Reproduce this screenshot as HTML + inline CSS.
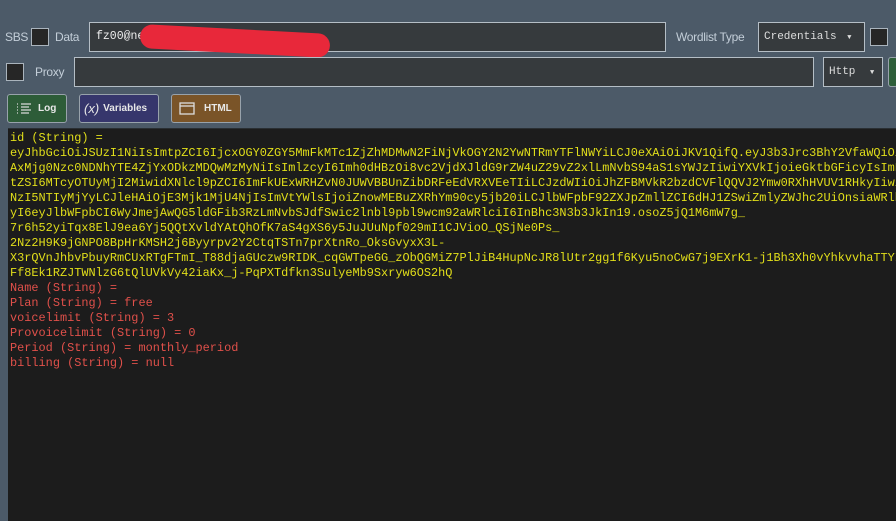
<!DOCTYPE html>
<html><head><meta charset="utf-8"><style>
*{box-sizing:border-box;margin:0;padding:0}
html,body{background:#4c5a68}
body{width:896px;height:521px;position:relative;overflow:hidden;font-family:"Liberation Sans",sans-serif;color:#c9d3dc}
.abs{position:absolute;white-space:nowrap}
.lbl{font-size:12px;color:#c3ced8;letter-spacing:-0.3px}
.cb{background:#262626;border:1px solid #aab4bd}
.inp{background:#363a3d;border:1px solid #b5bec6}
.btn{position:absolute;top:94px;height:29px;border:1px solid #98a2ab;border-radius:3px;font-size:10px;font-weight:bold;color:#e8e8e8;display:flex;align-items:center;white-space:nowrap}
#out{position:absolute;left:8px;top:128px;width:888px;height:393px;background:#1c1c1c;border-top:1px solid #2a2f33;font-family:"Liberation Mono",monospace;font-size:11.9px;line-height:15px;padding:2px 0 0 2px;white-space:pre;color:#e2df1a}
.r{color:#e0504a}
</style></head><body>
<div class="abs lbl" style="left:5px;top:30px">SBS</div>
<div class="abs cb" style="left:31px;top:28px;width:18px;height:18px"></div>
<div class="abs lbl" style="left:55px;top:30px">Data</div>
<div class="abs inp" style="left:89px;top:22px;width:577px;height:30px;font-family:'Liberation Mono',monospace;font-size:11.5px;color:#eee;padding:7px 6px">fz00@ne</div>
<div class="abs" style="left:140px;top:29px;width:190px;height:24px;background:#e8283a;border-radius:12px;transform:rotate(3deg)"></div>
<div class="abs lbl" style="left:676px;top:30px">Wordlist Type</div>
<div class="abs inp" style="left:758px;top:22px;width:107px;height:30px;font-family:'Liberation Mono',monospace;font-size:11px;color:#ddd;padding:8px 5px">Credentials <span style="font-size:7px;margin-left:4px">▼</span></div>
<div class="abs cb" style="left:870px;top:28px;width:18px;height:18px"></div>
<div class="abs cb" style="left:6px;top:63px;width:18px;height:18px"></div>
<div class="abs lbl" style="left:35px;top:65px">Proxy</div>
<div class="abs inp" style="left:74px;top:57px;width:740px;height:30px"></div>
<div class="abs inp" style="left:823px;top:57px;width:60px;height:30px;font-family:'Liberation Mono',monospace;font-size:11px;color:#ddd;padding:8px 5px">Http <span style="font-size:7px;margin-left:8px">▼</span></div>
<div class="abs" style="left:888px;top:57px;width:10px;height:30px;background:#2e5e3a;border:1px solid #98a2ab;border-radius:3px"></div>
<div class="btn" style="left:7px;width:60px;background:#2d5c38;padding-left:8px"><svg width="16" height="14" viewBox="0 0 16 14" stroke="#d8d8d8" stroke-width="1.2"><path d="M1 2h1M5 2h10M1 5h1M5 5h8M1 8h1M5 8h10M1 11h1M5 11h8"/></svg><span style="margin-left:6px">Log</span></div>
<div class="btn" style="left:79px;width:80px;background:#36366c;padding-left:4px"><span style="font-style:italic;font-weight:normal;font-size:13px">(x)</span><span style="margin-left:4px">Variables</span></div>
<div class="btn" style="left:171px;width:70px;background:#7a5428;padding-left:7px"><svg width="16" height="13" viewBox="0 0 16 13" fill="none" stroke="#ddd" stroke-width="1.3"><rect x="1" y="1" width="14" height="11"/><path d="M1 4h14"/></svg><span style="margin-left:9px">HTML</span></div>
<div id="out">id (String) = 
eyJhbGciOiJSUzI1NiIsImtpZCI6IjcxOGY0ZGY5MmFkMTc1ZjZhMDMwN2FiNjVkOGY2N2YwNTRmYTFlNWYiLCJ0eXAiOiJKV1QifQ.eyJ3b3Jrc3BhY2VfaWQiOiJk
AxMjg0Nzc0NDNhYTE4ZjYxODkzMDQwMzMyNiIsImlzcyI6Imh0dHBzOi8vc2VjdXJldG9rZW4uZ29vZ2xlLmNvbS94aS1sYWJzIiwiYXVkIjoieGktbGFicyIsImF1c
tZSI6MTcyOTUyMjI2MiwidXNlcl9pZCI6ImFkUExWRHZvN0JUWVBBUnZibDRFeEdVRXVEeTIiLCJzdWIiOiJhZFBMVkR2bzdCVFlQQVJ2Ymw0RXhHVUV1RHkyIiwiaW
NzI5NTIyMjYyLCJleHAiOjE3Mjk1MjU4NjIsImVtYWlsIjoiZnowMEBuZXRhYm90cy5jb20iLCJlbWFpbF92ZXJpZmllZCI6dHJ1ZSwiZmlyZWJhc2UiOnsiaWRlbnR
yI6eyJlbWFpbCI6WyJmejAwQG5ldGFib3RzLmNvbSJdfSwic2lnbl9pbl9wcm92aWRlciI6InBhc3N3b3JkIn19.osoZ5jQ1M6mW7g_
7r6h52yiTqx8ElJ9ea6Yj5QQtXvldYAtQhOfK7aS4gXS6y5JuJUuNpf029mI1CJVioO_QSjNe0Ps_
2Nz2H9K9jGNPO8BpHrKMSH2j6Byyrpv2Y2CtqTSTn7prXtnRo_OksGvyxX3L-
X3rQVnJhbvPbuyRmCUxRTgFTmI_T88djaGUczw9RIDK_cqGWTpeGG_zObQGMiZ7PlJiB4HupNcJR8lUtr2gg1f6Kyu5noCwG7j9EXrK1-j1Bh3Xh0vYhkvvhaTTYIi-
Ff8Ek1RZJTWNlzG6tQlUVkVy42iaKx_j-PqPXTdfkn3SulyeMb9Sxryw6OS2hQ
<span class="r">Name (String) = 
Plan (String) = free
voicelimit (String) = 3
Provoicelimit (String) = 0
Period (String) = monthly_period
billing (String) = null</span></div>
</body></html>
